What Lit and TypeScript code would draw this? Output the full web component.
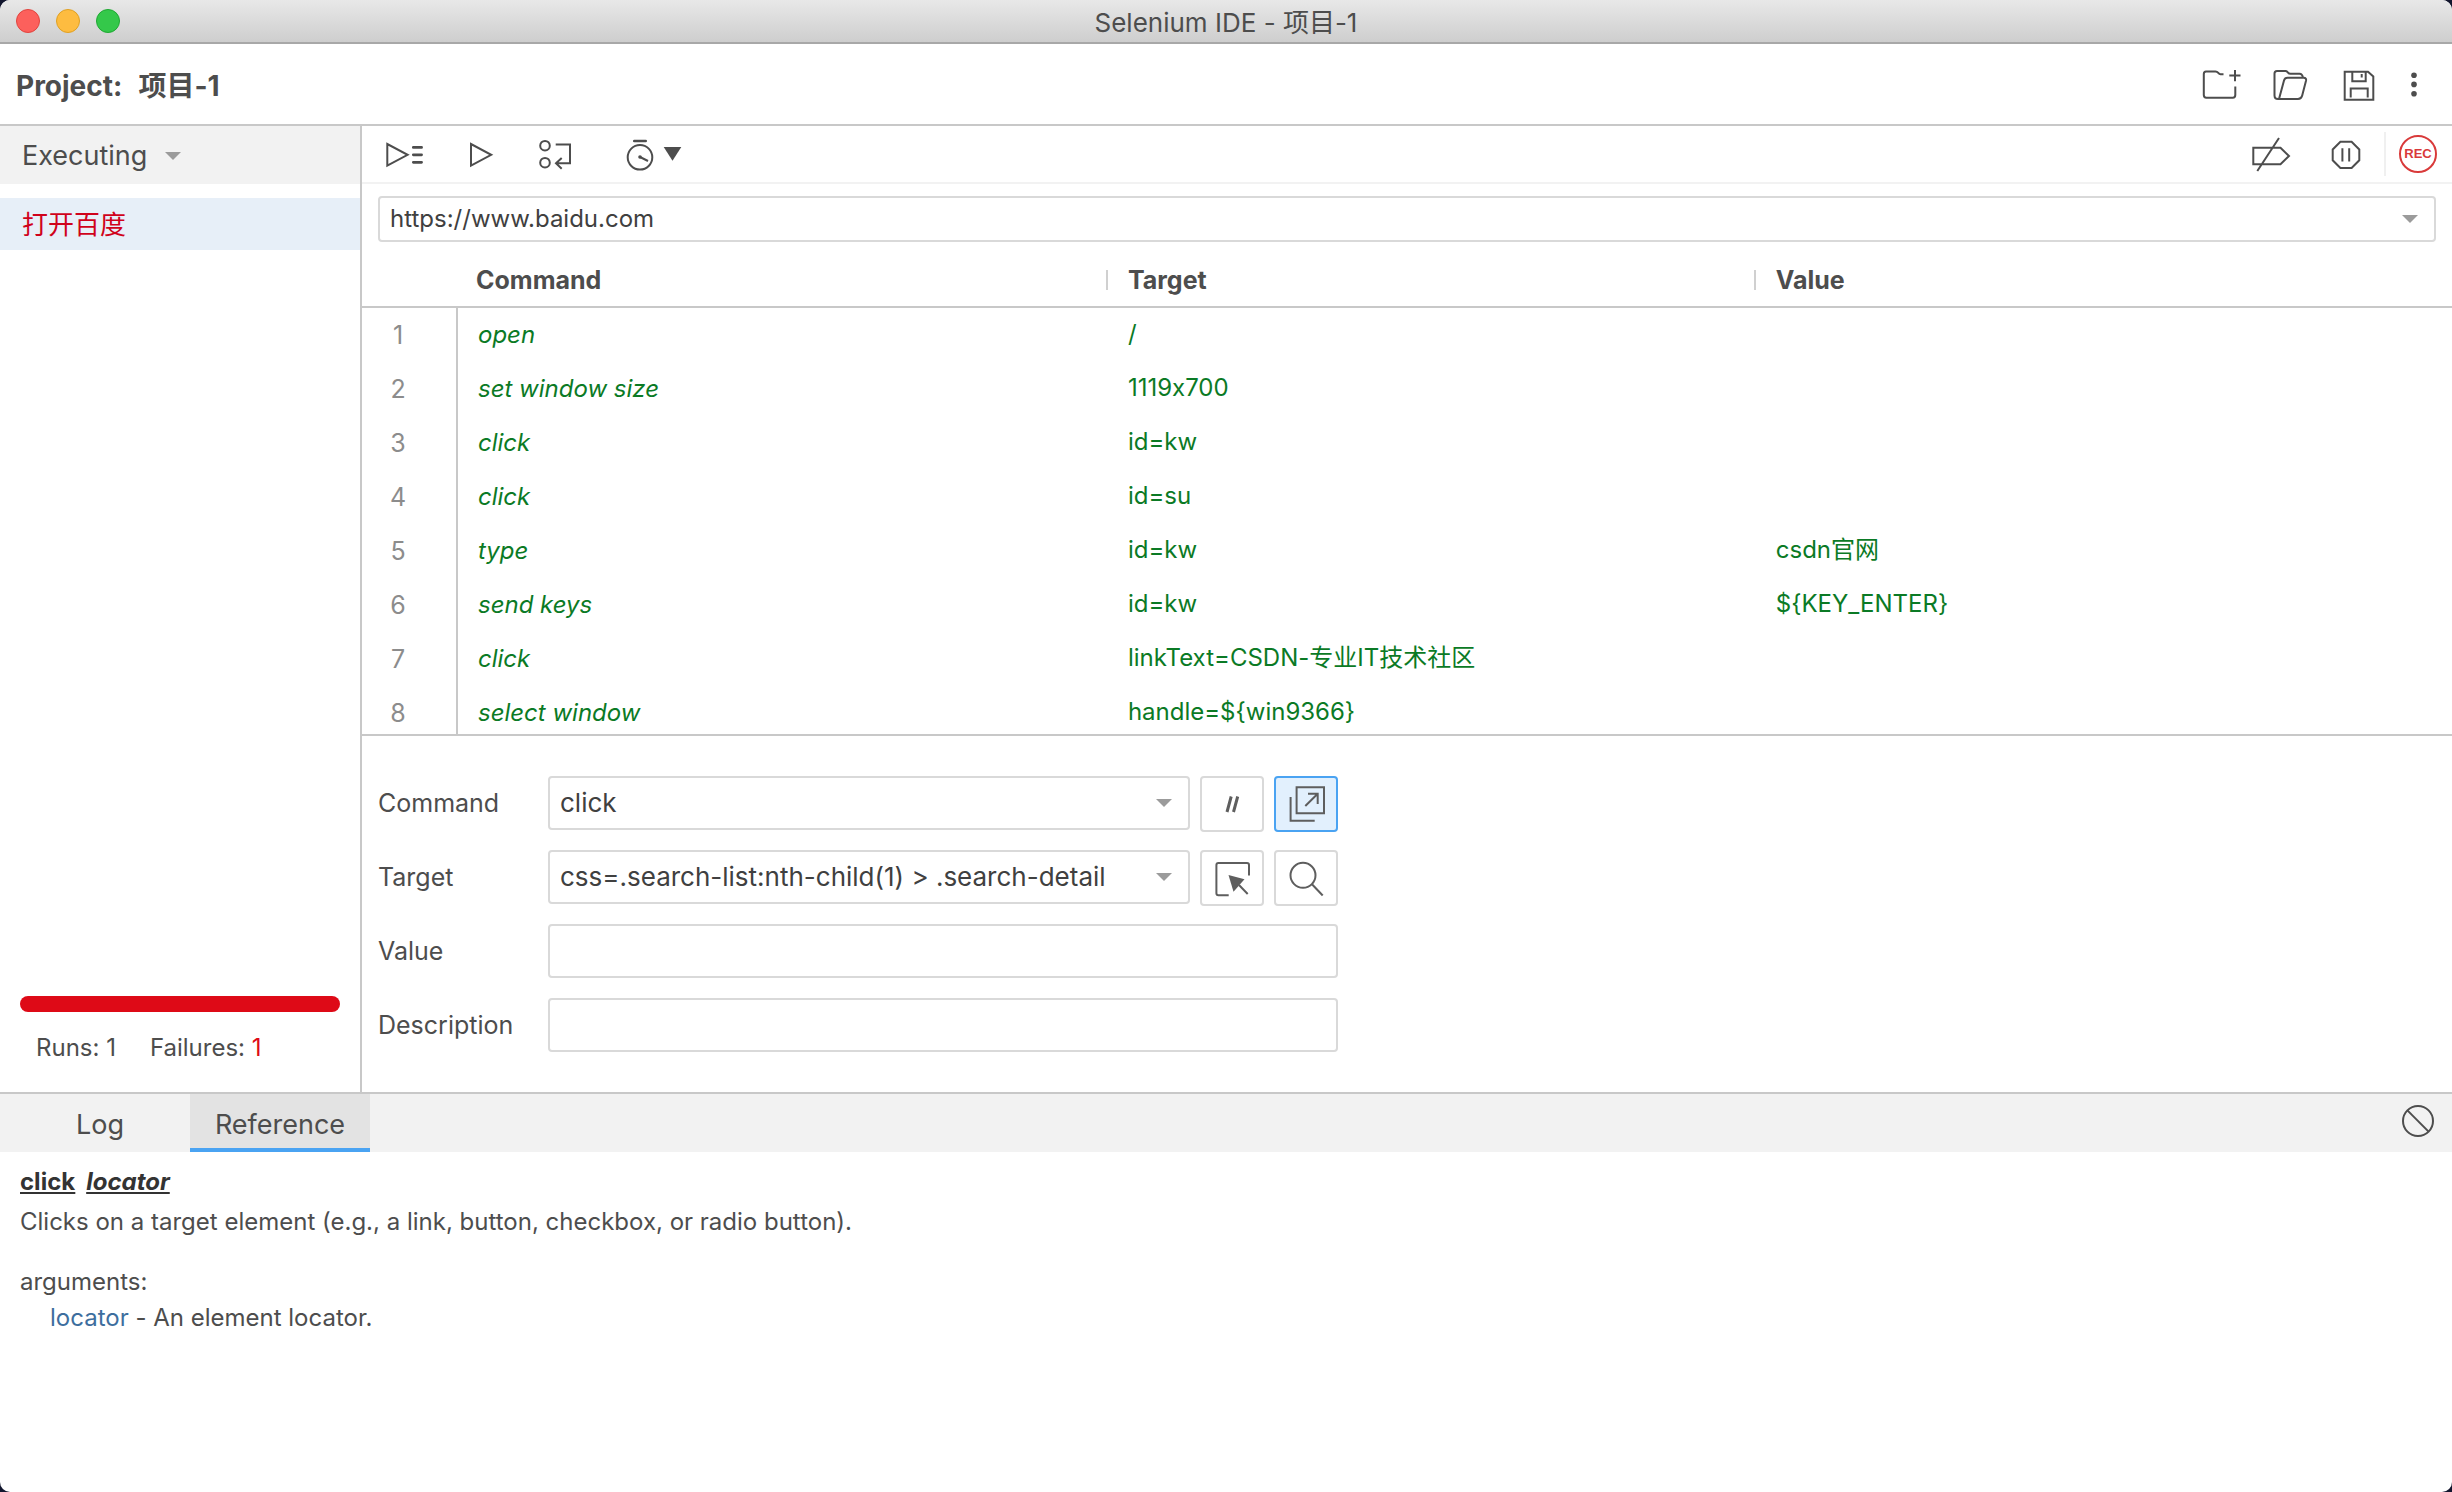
import { LitElement, html, css, svg, nothing } from "lit";
import { customElement, property, state } from "lit/decorators.js";
import { classMap } from "lit/directives/class-map.js";

interface Step {
  command: string;
  target: string;
  value: string;
}

const STEPS: Step[] = [
  { command: "open", target: "/", value: "" },
  { command: "set window size", target: "1119x700", value: "" },
  { command: "click", target: "id=kw", value: "" },
  { command: "click", target: "id=su", value: "" },
  { command: "type", target: "id=kw", value: "csdn官网" },
  { command: "send keys", target: "id=kw", value: "${KEY_ENTER}" },
  { command: "click", target: "linkText=CSDN-专业IT技术社区", value: "" },
  { command: "select window", target: "handle=${win9366}", value: "" },
];

const ICONS: Record<string, { w: number; h: number; body: unknown }> = {
  newProject: {
    w: 40,
    h: 40,
    body: svg`<path d="M22.5 10.3H19.5C17 10.3 17.5 7.5 14.5 7.5H5Q2.8 7.5 2.8 10V31Q2.8 33.7 5.3 33.7H31.8Q34.3 33.7 34.3 31V22.5M34 6V17.2M28.3 11.4H39.5"/>`,
  },
  openProject: {
    w: 40,
    h: 40,
    body: svg`<path d="M8 35Q4.5 35 4.5 31.5V9.5Q4.5 7 7 7H15.5C18 7 17.5 9.8 20.5 9.8H29.5Q32.3 9.8 33 13.7M9 35L14 16.5Q14.8 13.8 17.5 13.8H33.8Q36.6 13.8 36 16.8L32.2 31.5Q31.3 35 28 35H8"/>`,
  },
  saveProject: {
    w: 40,
    h: 40,
    body: svg`<path d="M5.7 7.8H29L34.3 12.5V35.8H5.7ZM13.3 8V17.3H26.7V8M22.7 10V13.5M11.7 33.5V24.4H28.7V33.5"/>`,
  },
  more: {
    w: 12,
    h: 40,
    body: svg`<g class="solid"><circle cx="6" cy="11.3" r="2.8"/><circle cx="6" cy="20.4" r="2.8"/><circle cx="6" cy="29.7" r="2.8"/></g>`,
  },
  runAll: {
    w: 40,
    h: 40,
    body: svg`<path d="M3.3 10V31.6L23.6 20.8Z"/><path class="bold" d="M29.3 13.4H37.6M29.3 20.8H37.6M29.3 28.3H37.6"/>`,
  },
  run: { w: 40, h: 40, body: svg`<path d="M10 10V31.6L30.2 20.8Z"/>` },
  stepOver: {
    w: 40,
    h: 40,
    body: svg`<circle cx="7" cy="11.7" r="4.8"/><circle cx="7" cy="28.7" r="4.8"/><path d="M17.7 10.4H32V29.3H18M23.7 24L18 29.3L23.7 34.7"/>`,
  },
  speed: {
    w: 72,
    h: 40,
    body: svg`<circle cx="25" cy="23.3" r="12.3"/><path class="bold" d="M19.3 7H30.7"/><path d="M25 23L33 27"/><circle class="solid" cx="25" cy="23" r="1.8"/><path class="solid" d="M48.7 13H66.3L57.5 26.7Z"/>`,
  },
  breakpoints: {
    w: 40,
    h: 40,
    body: svg`<path d="M2.3 13.7H29.5L38 22L29.5 30.3H2.3ZM28 4L6.3 37"/>`,
  },
  pause: {
    w: 40,
    h: 40,
    body: svg`<path d="M14.4 7.8H25.6L33.3 15.5V26.3L25.6 34H14.4L6.7 26.3V15.5ZM16.4 14.3V27.4M23.2 14.3V27.4"/>`,
  },
  comment: { w: 60, h: 52, body: svg`<path class="thick" d="M25 34L29.2 18.5M31.5 34L35.7 18.5"/>` },
  newWindow: {
    w: 60,
    h: 52,
    body: svg`<path d="M20.6 9.3H48V35.3H20.6ZM14.6 19V42.7H38.7M29.3 28L41.7 15.8M32 15.8H41.7V26"/>`,
  },
  pick: {
    w: 60,
    h: 52,
    body: svg`<path d="M47 23.5V13Q47 11 45 11H16.4Q14.4 11 14.4 13V41.3Q14.4 43.3 16.4 43.3H26.7M37 33L45.7 42"/><path class="solid" d="M26.5 23L42.5 27.3L31.5 39.7Z"/>`,
  },
  find: { w: 60, h: 52, body: svg`<circle cx="27" cy="23.3" r="12.5"/><path d="M36 32.3L46.7 43.5"/>` },
  clear: { w: 34, h: 34, body: svg`<circle cx="17" cy="17" r="15"/><path d="M6.4 6.4L27.6 27.6"/>` },
  caret: { w: 16, h: 8, body: svg`<path class="solid" d="M0 0H16L8 8Z"/>` },
};

@customElement("ide-icon")
export class IdeIcon extends LitElement {
  @property() name = "";

  static styles = css`
    :host {
      display: block;
    }
    .icon {
      display: block;
      fill: none;
      stroke: currentColor;
      stroke-width: 2;
    }
    .solid {
      fill: currentColor;
      stroke: none;
    }
    .bold {
      stroke-width: 2.7;
      stroke-linecap: round;
    }
    .thick {
      stroke-width: 3;
    }
  `;

  render() {
    const icon = ICONS[this.name];
    if (!icon) return nothing;
    return html`<svg class="icon" width=${icon.w} height=${icon.h} viewBox="0 0 ${icon.w} ${icon.h}" aria-hidden="true">
      ${icon.body}
    </svg>`;
  }
}

@customElement("app-root")
export class AppRoot extends LitElement {
  @state() private tab: "log" | "reference" = "reference";

  static styles = css`
    :host {
      display: block;
      height: 100vh;
      background: #12162e;
      color: #4d4d4d;
      font-family: Inter, "Noto Sans CJK SC", "Liberation Sans", sans-serif;
      font-size: 25px;
      font-variant-ligatures: no-contextual;
      line-height: 32px;
    }
    *,
    *::before {
      box-sizing: border-box;
    }
    button,
    select,
    input {
      margin: 0;
      padding: 0;
      border: 0;
      background: none;
      color: inherit;
      font: inherit;
      font-variant-ligatures: no-contextual;
    }
    .window {
      display: flex;
      flex-direction: column;
      height: 100%;
      border-radius: 10px;
      overflow: hidden;
      background: #fff;
    }
    .titlebar {
      display: grid;
      grid-template-columns: 1fr auto 1fr;
      align-items: center;
      flex: none;
      height: 44px;
      padding: 0 16px;
      background: linear-gradient(#e8e8e8, #cecece);
      border-bottom: 2px solid #a8a8a8;
    }
    .lights {
      display: flex;
      gap: 16px;
    }
    .light {
      width: 24px;
      height: 24px;
      border-radius: 50%;
      border: 1px solid;
    }
    .light.close {
      background: #fc605c;
      border-color: #e0443e;
    }
    .light.minimise {
      background: #fdbc40;
      border-color: #dfa023;
    }
    .light.zoom {
      background: #34c84a;
      border-color: #1fa833;
    }
    .title {
      margin: 0;
      padding-top: 4px;
      font-size: 26px;
      font-weight: 400;
    }
    .project {
      display: flex;
      align-items: center;
      justify-content: space-between;
      flex: none;
      height: 82px;
      padding: 0 32px 0 16px;
      border-bottom: 2px solid #c8c8c8;
    }
    .project-name {
      display: flex;
      gap: 16px;
      margin: 0;
      padding-top: 4px;
      font-size: 28px;
      font-weight: 700;
    }
    .actions {
      display: flex;
      gap: 29px;
    }
    .main {
      display: flex;
      flex: 1;
      min-height: 0;
    }
    .sidebar {
      display: flex;
      flex-direction: column;
      flex: none;
      width: 362px;
      border-right: 2px solid #c8c8c8;
    }
    .view {
      display: flex;
      align-items: center;
      gap: 18px;
      height: 58px;
      padding: 2px 22px 0;
      background: #f2f2f2;
      font-size: 27px;
      text-align: left;
    }
    .view-caret {
      color: #9b9b9b;
    }
    .tests {
      flex: 1;
      margin: 0;
      padding: 14px 0;
      list-style: none;
    }
    .test {
      display: block;
      width: 100%;
      height: 52px;
      padding: 2px 22px 0;
      background: #e7eff8;
      color: #d0021b;
      font-size: 26px;
      text-align: left;
    }
    .progress {
      height: 16px;
      margin: 0 20px;
      border-radius: 8px;
      background: #de0a17;
    }
    .counts {
      display: flex;
      gap: 34px;
      margin: 0;
      padding: 20px 36px 28px;
      font-size: 24px;
    }
    .failed {
      color: #de0a17;
    }
    .editor {
      display: flex;
      flex-direction: column;
      flex: 1;
      min-width: 0;
    }
    .toolbar {
      display: flex;
      align-items: center;
      justify-content: space-between;
      flex: none;
      height: 58px;
      padding: 0 15px 0 22px;
      border-bottom: 2px solid #f2f2f2;
    }
    .tools {
      display: flex;
      align-items: center;
      gap: 37px;
    }
    .options {
      display: flex;
      align-items: center;
      gap: 35px;
    }
    .record {
      display: flex;
      align-items: center;
      height: 44px;
      margin-left: -17px;
      padding-left: 13px;
      border-left: 2px solid #f0f0f0;
    }
    .rec {
      width: 38px;
      height: 38px;
      border: 2px solid #d93a3a;
      border-radius: 50%;
      color: #d93a3a;
      font: 700 13px/34px "Liberation Sans", sans-serif;
    }
    .combo {
      display: grid;
      align-items: center;
      min-width: 0;
    }
    .combo > * {
      grid-area: 1 / 1;
    }
    .combo-caret {
      justify-self: end;
      margin-right: 18px;
      color: #9b9b9b;
      pointer-events: none;
    }
    .field {
      width: 100%;
      height: 54px;
      padding: 0 10px;
      border: 2px solid #d9d9d9;
      border-radius: 4px;
      background: #fff;
      color: #404040;
      font-size: 26px;
      appearance: none;
    }
    .url {
      flex: none;
      padding: 12px 16px 0;
    }
    .url .field {
      height: 46px;
      font-size: 24px;
    }
    .steps {
      flex: 1;
      min-height: 0;
      overflow: hidden;
      border-bottom: 2px solid #c8c8c8;
    }
    .table {
      width: 100%;
      table-layout: fixed;
      border-collapse: separate;
      border-spacing: 0;
    }
    .col-number {
      width: 96px;
    }
    .col-command,
    .col-target {
      width: 31%;
    }
    .table th {
      height: 66px;
      padding: 12px 0 0;
      border-bottom: 2px solid #c8c8c8;
      font-weight: 700;
      text-align: left;
    }
    .table .head-command {
      padding-left: 18px;
    }
    .head-label {
      display: flex;
      align-items: center;
      gap: 20px;
    }
    .head-label::before {
      content: "";
      width: 2px;
      height: 20px;
      background: #d0d0d0;
    }
    .table td {
      height: 54px;
      padding: 0 0 2px 22px;
      color: #0b7a25;
      font-size: 24px;
    }
    .table .number {
      padding: 0 22px 0 0;
      border-right: 2px solid #c8c8c8;
      color: #8c8c8c;
      font-size: 25px;
      text-align: center;
    }
    .table .command {
      padding: 0 0 0 20px;
      font-style: italic;
    }
    .form {
      display: grid;
      grid-template-columns: 160px minmax(0, 642px) 64px 64px;
      grid-auto-rows: 54px;
      align-items: start;
      gap: 20px 10px;
      flex: none;
      padding: 40px 16px;
    }
    .label {
      align-self: center;
    }
    .wide {
      grid-column: span 3;
    }
    .square {
      width: 64px;
      height: 56px;
      border: 2px solid #d9d9d9;
      border-radius: 4px;
      color: #5e5e5e;
      overflow: hidden;
    }
    .square.active {
      border-color: #4aa3f2;
      background: #e2f0fd;
    }
    .panel {
      flex: none;
      height: 400px;
      border-top: 2px solid #c8c8c8;
    }
    .tabs {
      display: flex;
      align-items: stretch;
      height: 58px;
      padding-right: 17px;
      background: #f2f2f2;
      font-size: 27px;
    }
    .tab {
      width: 180px;
      padding-top: 8px;
      border-bottom: 4px solid transparent;
    }
    .tab:first-child {
      width: 190px;
      padding-left: 10px;
    }
    .tab.selected {
      border-color: #4aa3f2;
      background: #e3e3e3;
    }
    .clear {
      align-self: center;
      margin: 0 0 4px auto;
    }
    .doc {
      padding: 12px 20px;
      font-size: 24px;
      line-height: 36px;
    }
    .signature {
      display: flex;
      gap: 11px;
      margin: 0;
      color: #333;
      font-size: 24px;
      font-weight: 700;
      text-decoration: underline;
    }
    .text {
      margin: 4px 0 24px;
    }
    .arguments {
      margin: 0;
    }
    .argument {
      margin: 0;
      padding-left: 30px;
    }
    .link {
      color: #3d6e9e;
      text-decoration: none;
    }
  `;

  private iconButton(icon: string, label: string) {
    return html`<button type="button" title=${label} aria-label=${label}><ide-icon name=${icon}></ide-icon></button>`;
  }

  private squareButton(icon: string, label: string, active = false) {
    return html`<button type="button" class=${classMap({ square: true, active })} title=${label} aria-label=${label}>
      <ide-icon name=${icon}></ide-icon>
    </button>`;
  }

  private combo(id: string, value: string) {
    return html`<div class="combo">
      <select class="field" id=${id} aria-label=${id}>
        <option>${value}</option>
      </select>
      <ide-icon class="combo-caret" name="caret"></ide-icon>
    </div>`;
  }

  private renderSidebar() {
    return html`<nav class="sidebar" aria-label="Tests">
      <button type="button" class="view">Executing <ide-icon class="view-caret" name="caret"></ide-icon></button>
      <ul class="tests">
        <li><button type="button" class="test">打开百度</button></li>
      </ul>
      <div class="progress" role="progressbar" aria-label="Progress" aria-valuenow="100"></div>
      <p class="counts">
        <span>Runs: 1</span><span>Failures: <span class="failed">1</span></span>
      </p>
    </nav>`;
  }

  private renderToolbar() {
    return html`<div class="toolbar" role="toolbar" aria-label="Playback">
      <div class="tools">
        ${this.iconButton("runAll", "Run all tests")} ${this.iconButton("run", "Run current test")}
        ${this.iconButton("stepOver", "Step over")} ${this.iconButton("speed", "Execution speed")}
      </div>
      <div class="options">
        ${this.iconButton("breakpoints", "Disable breakpoints")} ${this.iconButton("pause", "Pause on exceptions")}
        <div class="record"><button type="button" class="rec">REC</button></div>
      </div>
    </div>`;
  }

  private renderSteps() {
    return html`<div class="steps">
      <table class="table">
        <colgroup>
          <col class="col-number" />
          <col class="col-command" />
          <col class="col-target" />
          <col />
        </colgroup>
        <thead>
          <tr>
            <th></th>
            <th class="head-command">Command</th>
            <th><div class="head-label">Target</div></th>
            <th><div class="head-label">Value</div></th>
          </tr>
        </thead>
        <tbody>
          ${STEPS.map(
            (step, i) => html`<tr>
              <td class="number">${i + 1}</td>
              <td class="command">${step.command}</td>
              <td>${step.target}</td>
              <td>${step.value}</td>
            </tr>`
          )}
        </tbody>
      </table>
    </div>`;
  }

  private renderForm() {
    return html`<form class="form">
      <label class="label" for="command">Command</label>
      ${this.combo("command", "click")} ${this.squareButton("comment", "Enable or disable command")}
      ${this.squareButton("newWindow", "Opens a new window", true)}
      <label class="label" for="target">Target</label>
      ${this.combo("target", "css=.search-list:nth-child(1) > .search-detail")}
      ${this.squareButton("pick", "Select target in page")} ${this.squareButton("find", "Find target in page")}
      <label class="label" for="value">Value</label>
      <div class="wide"><input class="field" id="value" type="text" /></div>
      <label class="label" for="description">Description</label>
      <div class="wide"><input class="field" id="description" type="text" /></div>
    </form>`;
  }

  private renderPanel() {
    const tab = (id: "log" | "reference", label: string) =>
      html`<button
        type="button"
        role="tab"
        aria-selected=${this.tab === id}
        class=${classMap({ tab: true, selected: this.tab === id })}
        @click=${() => (this.tab = id)}
      >
        ${label}
      </button>`;
    return html`<section class="panel">
      <div class="tabs" role="tablist">
        ${tab("log", "Log")}${tab("reference", "Reference")}
        <button type="button" class="clear" title="Clear" aria-label="Clear"><ide-icon name="clear"></ide-icon></button>
      </div>
      ${this.tab === "reference"
        ? html`<div class="doc">
            <h2 class="signature"><u>click</u><em>locator</em></h2>
            <p class="text">Clicks on a target element (e.g., a link, button, checkbox, or radio button).</p>
            <p class="arguments">arguments:</p>
            <p class="argument"><a class="link" href="#locator">locator</a> - An element locator.</p>
          </div>`
        : nothing}
    </section>`;
  }

  render() {
    return html`<div class="window">
      <header class="titlebar">
        <div class="lights">
          <span class="light close"></span><span class="light minimise"></span><span class="light zoom"></span>
        </div>
        <h1 class="title">Selenium IDE - 项目-1</h1>
      </header>
      <div class="project">
        <h2 class="project-name"><span>Project:</span><span>项目-1</span></h2>
        <div class="actions">
          ${this.iconButton("newProject", "Create new project")} ${this.iconButton("openProject", "Open project")}
          ${this.iconButton("saveProject", "Save project")} ${this.iconButton("more", "More options")}
        </div>
      </div>
      <div class="main">
        ${this.renderSidebar()}
        <main class="editor">
          ${this.renderToolbar()}
          <div class="url">${this.combo("url", "https://www.baidu.com")}</div>
          ${this.renderSteps()} ${this.renderForm()}
        </main>
      </div>
      ${this.renderPanel()}
    </div>`;
  }
}
